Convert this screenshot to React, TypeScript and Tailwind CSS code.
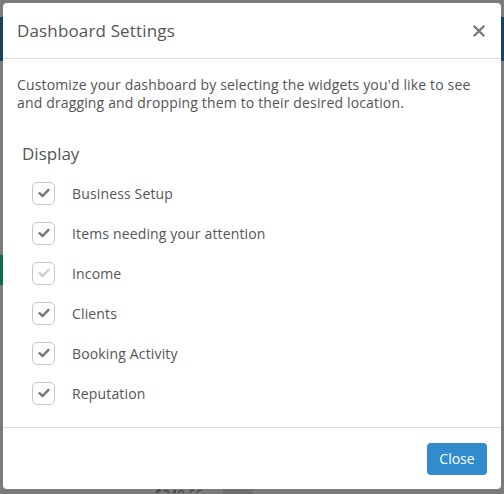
import React from "react";

const items = [
  { label: "Business Setup", light: false },
  { label: "Items needing your attention", light: false },
  { label: "Income", light: true },
  { label: "Clients", light: false },
  { label: "Booking Activity", light: false },
  { label: "Reputation", light: false },
];

function Check({ light }: { light: boolean }) {
  return (
    <div className="w-[23px] h-[23px] rounded-[5px] border border-[#c8c8c8] bg-white flex items-center justify-center">
      <svg width="12" height="10" viewBox="0 0 12 10">
        <path
          d="M1.5 5.2 L4.6 8 L10.5 1.8"
          fill="none"
          stroke={light ? "#cfcfcf" : "#777777"}
          strokeWidth="2.4"
          strokeLinecap="round"
          strokeLinejoin="round"
        />
      </svg>
    </div>
  );
}

export default function App() {
  return (
    <div
      className="relative w-[504px] h-[494px] overflow-hidden bg-[#7b7b7b]"
      style={{ fontFamily: "'Open Sans', 'Liberation Sans', sans-serif" }}
    >
      {/* dimmed page underneath */}
      <div className="flex flex-col h-full">
        <div className="h-[17px]" />
        <div className="h-[44px] bg-[#17425f]" />
        <div className="h-[194px]" />
        <div className="h-[30px] w-[10px] bg-[#0f6b50]" />
        <div className="flex-1" />
        <div className="h-[5px] flex text-[13px] text-[#333] leading-none">
          <div className="ml-[155px] -mt-[1px] h-[5px] overflow-hidden">$240.66</div>
          <div className="ml-[20px] w-[30px] bg-[#6e6e6e]" />
        </div>
      </div>

      {/* modal */}
      <div className="absolute left-[3px] top-[3px] w-[498px] h-[486px] bg-white rounded-[4px] flex flex-col">
        <div className="h-[56px] flex items-center justify-between pl-[14px] pr-[16px] border-b border-[#dcdcdc]">
          <div className="text-[17px] text-[#555] tracking-[0.15px]">Dashboard Settings</div>
          <svg width="12" height="12" viewBox="0 0 12 12">
            <path d="M1.5 1.5 L10.5 10.5 M10.5 1.5 L1.5 10.5" stroke="#777" strokeWidth="2.4" strokeLinecap="round" />
          </svg>
        </div>
        <div className="flex-1 px-[14px] pt-[17px]">
          <p className="text-[14px] leading-[18px] text-[#555] tracking-[0.15px]">
            Customize your dashboard by selecting the widgets you'd like to see and dragging and dropping them to their desired location.
          </p>
          <div className="mt-[29px] ml-[5px] text-[17px] text-[#555]">Display</div>
          <div className="mt-[15px] ml-[15px] flex flex-col gap-[17px]">
            {items.map((it) => (
              <div key={it.label} className="flex items-center">
                <Check light={it.light} />
                <div className="ml-[17px] text-[14px] text-[#555] tracking-[0.15px]">{it.label}</div>
              </div>
            ))}
          </div>
        </div>
        <div className="h-[62px] border-t border-[#dcdcdc] flex items-center justify-end pr-[14px]">
          <button className="w-[60px] h-[32px] rounded-[4px] bg-[#308ccc] text-white text-[14px]">Close</button>
        </div>
      </div>
    </div>
  );
}
